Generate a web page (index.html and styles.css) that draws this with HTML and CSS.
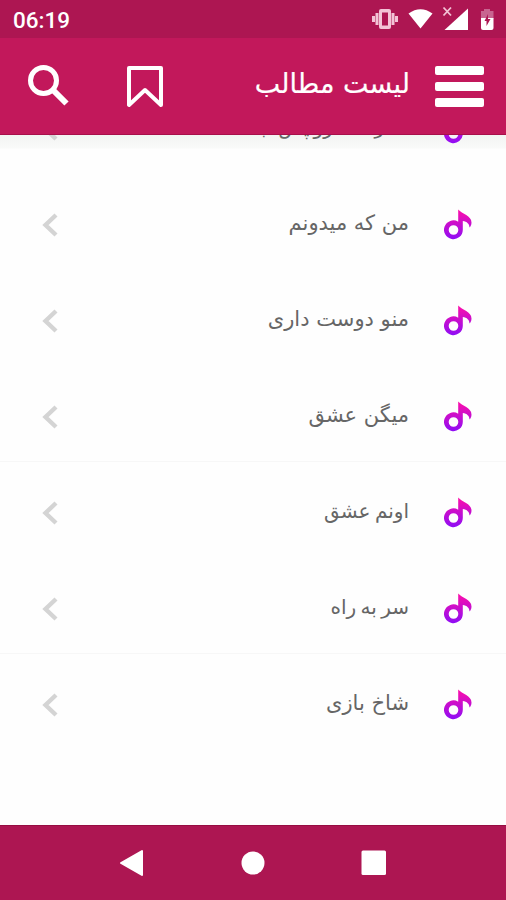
FILE: index.html
```html
<!DOCTYPE html>
<html lang="fa">
<head>
    <meta charset="UTF-8">
    <meta name="viewport" content="width=device-width, initial-scale=1.0">
    <title>لیست مطالب</title>
    <link rel="stylesheet" href="styles.css">
</head>
<body>
    <!-- Shared icons -->
    <svg class="icon-defs" width="0" height="0">
        <defs>
            <linearGradient id="note-fill" x1="0" y1="0" x2="0" y2="1">
                <stop offset="0" stop-color="#ff0fa8"/>
                <stop offset="1" stop-color="#8f0df5"/>
            </linearGradient>
        </defs>
        <symbol id="note" viewBox="0 0 28 31">
            <path fill="url(#note-fill)" fill-rule="evenodd" d="M14.200 0.500C18 5 27.500 6.500 27.500 13.500C27.500 16 26.500 17.500 25.500 18.500C25.500 15 23 12.500 18.800 12V21A9.400 9.400 0 1 1 14.200 12.700ZM9.500 16.200A4.800 4.800 0 1 0 9.500 25.800A4.800 4.800 0 1 0 9.500 16.200Z"/>
        </symbol>
        <symbol id="chevron" viewBox="0 0 16 24">
            <path d="M14 2L3.500 12L14 22" fill="none" stroke="#d4d4d4" stroke-width="4.400"/>
        </symbol>
    </svg>

    <div class="screen">
        <!-- Status bar -->
        <div class="status-bar">
            <span class="clock">06:19</span>
            <svg class="status-icons" width="126" height="26" viewBox="0 0 126 26">
                <g fill="#f3c3d6">
                    <path fill-rule="evenodd" d="M9 3H17Q19 3 19 5V21Q19 23 17 23H9Q7 23 7 21V5Q7 3 9 3ZM10 6.500V19.500H16V6.500Z"/>
                    <path d="M3.500 7H6.500V19H3.500ZM0 10H3V16H0ZM19.500 7H22.500V19H19.500ZM23 10H26V16H23Z"/>
                </g>
                <path fill="#fff" d="M36.500 7.500Q48.500 -1 60.500 7.500L48.500 22.500Z"/>
                <path fill="#fff" d="M96 2.500V24H72.500Z"/>
                <path d="M71.500 1.500L79 9.500M79 1.500L71.500 9.500" stroke="#f3c3d6" stroke-width="1.800"/>
                <path fill="#c86590" d="M112 3H118V5H121.500V13H109V5H112Z"/>
                <path fill="#fff" d="M109 12H121.500V22Q121.500 24 119.500 24H111Q109 24 109 22Z"/>
                <path fill="#ad1652" d="M116 8V13H118.500L114.500 20V15H112.500Z"/>
            </svg>
        </div>

        <!-- App toolbar -->
        <header class="toolbar">
            <svg class="search" width="42" height="42" viewBox="0 0 42 42" fill="none" stroke="#fff">
                <circle cx="15.500" cy="15.500" r="13" stroke-width="5"/>
                <path d="M25 25L38.500 38.500" stroke-width="6"/>
            </svg>
            <svg class="bookmark" width="38" height="43" viewBox="0 0 38 43" fill="none" stroke="#fff" stroke-width="4" stroke-linejoin="round">
                <path d="M3 3H35V40L19 25L3 40Z"/>
            </svg>
            <h1 class="title">لیست مطالب</h1>
            <div class="menu">
                <span></span>
                <span></span>
                <span></span>
            </div>
        </header>

        <!-- Scrolled list -->
        <main class="content">
            <ul class="list">
                <li class="row">
                    <svg class="chevron"><use href="#chevron"/></svg>
                    <span class="name tight">عمر همه رو پس ب</span>
                    <svg class="note"><use href="#note"/></svg>
                </li>
                <li class="row">
                    <svg class="chevron"><use href="#chevron"/></svg>
                    <span class="name">من که میدونم</span>
                    <svg class="note"><use href="#note"/></svg>
                </li>
                <li class="row">
                    <svg class="chevron"><use href="#chevron"/></svg>
                    <span class="name">منو دوست داری</span>
                    <svg class="note"><use href="#note"/></svg>
                </li>
                <li class="row lined">
                    <svg class="chevron"><use href="#chevron"/></svg>
                    <span class="name">میگن عشق</span>
                    <svg class="note"><use href="#note"/></svg>
                </li>
                <li class="row">
                    <svg class="chevron"><use href="#chevron"/></svg>
                    <span class="name tight">اونم عشق</span>
                    <svg class="note"><use href="#note"/></svg>
                </li>
                <li class="row lined">
                    <svg class="chevron"><use href="#chevron"/></svg>
                    <span class="name tight">سر به راه</span>
                    <svg class="note"><use href="#note"/></svg>
                </li>
                <li class="row">
                    <svg class="chevron"><use href="#chevron"/></svg>
                    <span class="name">شاخ بازی</span>
                    <svg class="note"><use href="#note"/></svg>
                </li>
            </ul>
        </main>

        <!-- Android navigation keys -->
        <nav class="nav-bar">
            <svg width="26" height="28" viewBox="0 0 26 28"><path fill="#fff" stroke="#fff" stroke-width="2" stroke-linejoin="round" d="M2 14L23 2V26Z"/></svg>
            <svg width="24" height="24" viewBox="0 0 24 24"><circle cx="12" cy="12" r="11.500" fill="#fff"/></svg>
            <svg width="26" height="26" viewBox="0 0 26 26"><rect x="0.500" y="0.500" width="24.500" height="24.500" rx="1.500" fill="#fff"/></svg>
        </nav>
    </div>
</body>
</html>
```
FILE: styles.css
```css
* {
    margin: 0;
    padding: 0;
    box-sizing: border-box;
}

body {
    background: #fff;
    font-family: "DejaVu Sans", sans-serif;
}

.icon-defs {
    display: block;
}

.screen {
    height: 900px;
    display: flex;
    flex-direction: column;
    overflow: hidden;
}

/* Status bar */
.status-bar {
    height: 38px;
    flex: none;
    display: flex;
    justify-content: space-between;
    align-items: center;
    padding: 0 8px 0 13px;
    background: #ad1652;
}

.clock {
    font-family: Roboto, sans-serif;
    font-size: 22.5px;
    font-weight: 500;
    line-height: 26px;
    margin-top: 2px;
    color: #fff;
}

/* Toolbar */
.toolbar {
    height: 97px;
    flex: none;
    display: flex;
    align-items: center;
    padding: 0 22px 0 28px;
    background: #c2185b;
    border-bottom: 1px solid #a80f4b;
}

.bookmark {
    margin-left: 56px;
}

.title {
    flex: 1;
    direction: rtl;
    font-size: 27px;
    font-weight: 400;
    line-height: 40px;
    margin: 0 25px 5px 0;
    -webkit-text-stroke: 0.2px #fff;
    color: #fff;
}

.menu {
    width: 49px;
    display: flex;
    flex-direction: column;
    gap: 7px;
}

.menu span {
    height: 9px;
    border-radius: 2px;
    background: #fff;
}

/* List */
.content {
    flex: 1;
    overflow: hidden;
    background: linear-gradient(#f3f4f3, #f9faf9 13px, #fefefe 14px);
}

.list {
    list-style: none;
    margin-top: -57px;
}

.row {
    height: 96px;
    display: flex;
    align-items: center;
    padding: 4px 34px 0 42px;
}

.lined {
    box-shadow: inset 0 -1px #f7f7f7;
}

.row .chevron {
    width: 16px;
    height: 24px;
    margin-top: 1px;
}

.name {
    flex: 1;
    direction: rtl;
    font-size: 21px;
    line-height: 32px;
    margin: 0 35px 2px 0;
    color: #666;
}

.tight {
    font-size: 20px;
    word-spacing: -2px;
}

.row .note {
    width: 28px;
    height: 31px;
}

/* Navigation bar */
.nav-bar {
    height: 75px;
    flex: none;
    display: flex;
    justify-content: center;
    align-items: center;
    gap: 96px;
    background: #ad1652;
    border-top: 1px solid #960d42;
}
```
